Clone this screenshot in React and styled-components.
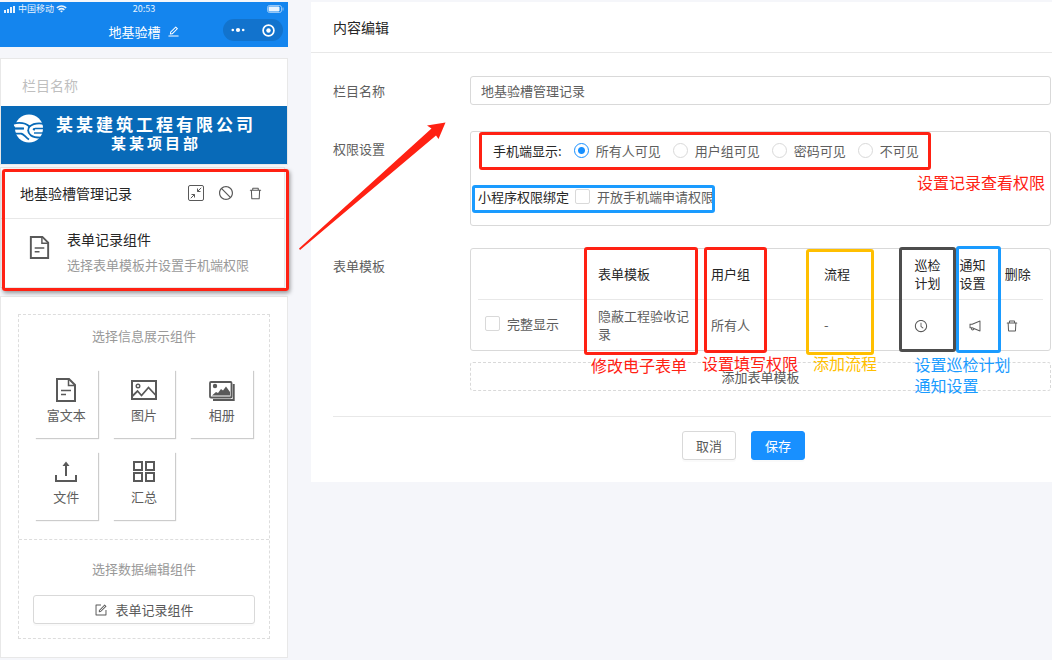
import React, { useState } from "react";
import styled, { createGlobalStyle } from "styled-components";
import {
    AiOutlineClockCircle,
    AiOutlineDelete,
    AiOutlineEdit,
    AiOutlineForm,
    AiOutlineNotification,
    AiOutlineStop,
} from "react-icons/ai";

const RED = "#ff2113";
const BLUE = "#1a9bff";
const YELLOW = "#ffbf00";
const DARK = "#4d4d4d";

const GlobalStyle = createGlobalStyle`
  * {
    box-sizing: border-box;
  }

  body {
    margin: 0;
    background: #f5f6fa;
    color: #5e5e5e;
    font-family: "Noto Sans CJK SC", sans-serif;
    font-size: 13px;
    line-height: 20px;
  }

  button,
  input {
    font: inherit;
    color: inherit;
  }
`;

const Page = styled.div`
  position: relative;
  display: flex;
  align-items: flex-start;
  gap: 23px;
  padding-top: 2px;
`;

/* ---------- annotations ---------- */

const Mark = styled.span`
  position: absolute;
  z-index: 2;
  top: ${(p) => p.$top}px;
  left: ${(p) => p.$left}px;
  width: ${(p) => p.$width}px;
  height: ${(p) => p.$height}px;
  border: 3px solid ${(p) => p.$color};
  border-radius: 3px;
  box-shadow: ${(p) => (p.$shadow ? "1px 2px 4px rgba(0, 0, 0, 0.4)" : "none")};
  pointer-events: none;
`;

const Note = styled.span`
  position: absolute;
  z-index: 2;
  top: ${(p) => p.$top}px;
  left: ${(p) => p.$left}px;
  color: ${(p) => p.$color};
  font-size: 16px;
  line-height: 21px;
  white-space: nowrap;
  pointer-events: none;
`;

const Arrow = styled.svg`
  position: absolute;
  z-index: 3;
  top: 122px;
  left: 298px;
  pointer-events: none;
`;

/* ---------- phone preview ---------- */

const Phone = styled.aside`
  flex: none;
  width: 288px;
`;

const PhoneHeader = styled.header`
  height: 45px;
  background: #1485ee;
  color: #fff;
`;

const StatusBar = styled.div`
  display: grid;
  grid-template-columns: 1fr auto 1fr;
  align-items: center;
  height: 14px;
  padding: 0 4px;
  font-size: 9px;
  line-height: 14px;
  opacity: 0.9;
`;

const StatusGroup = styled.div`
  display: flex;
  align-items: center;
  justify-content: ${(p) => (p.$end ? "flex-end" : "flex-start")};
  gap: 2px;
`;

const TitleBar = styled.div`
  display: grid;
  grid-template-columns: 1fr auto 1fr;
  align-items: center;
  height: 28px;
`;

const PhoneTitle = styled.div`
  grid-column: 2;
  display: flex;
  align-items: center;
  gap: 6px;
  padding-top: 3px;
`;

const Capsule = styled.div`
  justify-self: end;
  display: flex;
  align-items: center;
  justify-content: space-around;
  width: 60px;
  height: 22px;
  margin-right: 5px;
  border-radius: 11px;
  background: #1273cd;
`;

const NameBox = styled.div`
  margin-top: 11px;
  border: 1px solid #e8e8e8;
  background: #fff;
`;

const NameInput = styled.input`
  display: block;
  width: 100%;
  height: 47px;
  padding: 4px 21px 0;
  border: 0;
  outline: 0;
  background: transparent;
  font-size: 14px;

  &::placeholder {
    color: #bfbfbf;
    opacity: 1;
  }
`;

const Banner = styled.div`
  display: flex;
  align-items: flex-start;
  height: 58px;
  padding: 8px 20px 0 12px;
  background: #086ab8;
  color: #fff;
`;

const BannerText = styled.div`
  flex: 1;
  text-align: center;
  font-weight: 700;
`;

const Company = styled.div`
  font-size: 17px;
  letter-spacing: 3px;
`;

const Project = styled.div`
  font-size: 15px;
  letter-spacing: 3px;
  line-height: 18px;
`;

const RecordCard = styled.section`
  position: relative;
  margin: 2px 3px 0 0;
  border: 1px solid #e8e8e8;
  background: #fff;
`;

const RecordHead = styled.div`
  display: flex;
  align-items: center;
  justify-content: space-between;
  height: 51px;
  padding: 0 21px 0 19px;
  border-bottom: 1px solid #e8e8e8;
  color: #262626;
  font-size: 14px;
`;

const Actions = styled.div`
  display: flex;
  align-items: center;
  gap: 14px;
`;

const IconButton = styled.button`
  display: inline-flex;
  padding: 0;
  border: 0;
  background: none;
  color: ${(p) => p.$color || "#595959"};
  vertical-align: middle;
  cursor: pointer;
`;

const RecordBody = styled.div`
  display: flex;
  gap: 15px;
  height: 68px;
  padding: 8px 0 0 26px;
`;

const RecordIcon = styled.div`
  padding-top: 8px;
`;

const RecordName = styled.div`
  color: #262626;
  font-size: 14px;
  line-height: 24px;
`;

const RecordHint = styled.div`
  color: #999;
  line-height: 28px;
  white-space: nowrap;
`;

const Picker = styled.section`
  margin-top: 8px;
  padding: 17px 17px 18px;
  border: 1px solid #e8e8e8;
  background: #fff;
`;

const PickerBox = styled.div`
  border: 1px dashed #ddd;
`;

const PickerGroup = styled.div`
  padding: ${(p) => (p.$last ? "19px 14px 14px" : "11px 16px 19px")};
  border-top: ${(p) => (p.$last ? "1px dashed #ddd" : "0")};
`;

const PickerTitle = styled.div`
  margin-bottom: ${(p) => (p.$tight ? 16 : 24)}px;
  color: #999;
  text-align: center;
`;

const Tiles = styled.div`
  display: grid;
  grid-template-columns: repeat(3, 1fr);
  gap: 14px 15px;
`;

const Tile = styled.button`
  display: flex;
  flex-direction: column;
  align-items: center;
  gap: 2px;
  height: 68px;
  padding: 7px 0 0;
  border: 0;
  background: #fff;
  box-shadow: 1px 1px 1px #ccc;
  cursor: pointer;
`;

/* ---------- buttons ---------- */

const Button = styled.button`
  display: flex;
  align-items: center;
  justify-content: center;
  gap: 7px;
  width: ${(p) => (p.$block ? "100%" : "54px")};
  height: 29px;
  padding: 0;
  border: 1px ${(p) => (p.$dashed ? "dashed" : "solid")}
    ${(p) => (p.$primary ? "#1890ff" : "#d9d9d9")};
  border-radius: 3px;
  background: ${(p) => (p.$primary ? "#1890ff" : "#fff")};
  color: ${(p) => (p.$primary ? "#fff" : "#595959")};
  box-shadow: ${(p) => (p.$dashed ? "none" : "0 2px 0 rgba(0, 0, 0, 0.02)")};
  cursor: pointer;
`;

/* ---------- editor ---------- */

const Editor = styled.main`
  flex: 1;
  min-width: 0;
  background: #fff;
`;

const EditorTitle = styled.h1`
  margin: 0;
  padding: 15px 22px;
  border-bottom: 1px solid #e8e8e8;
  color: #262626;
  font-size: 14px;
  font-weight: 400;
  line-height: 20px;
`;

const Form = styled.form`
  padding: 23px 1px 22px 22px;
`;

const FormRow = styled.div`
  display: grid;
  grid-template-columns: 137px minmax(0, 1fr);
  align-items: start;
  margin-bottom: 22px;
`;

const Label = styled.label`
  padding: ${(p) => (p.$low ? "3px 0 0" : "0 0 4px")};
  line-height: 29px;
`;

const TextInput = styled.input`
  width: 100%;
  height: 29px;
  padding: 0 10px;
  border: 1px solid #d9d9d9;
  border-radius: 3px;
  outline: 0;
`;

const Panel = styled.div`
  position: relative;
  height: ${(p) => (p.$height ? `${p.$height}px` : "auto")};
  padding: 0 7px;
  border: 1px solid #d9d9d9;
  border-radius: 3px;
`;

const OptionLine = styled.div`
  display: flex;
  align-items: center;
  gap: ${(p) => (p.$gap ? p.$gap : 12)}px;
  height: 37px;
  margin-bottom: 9px;
  padding-left: ${(p) => (p.$indent ? 15 : 0)}px;
`;

const OptionTitle = styled.span`
  color: #262626;
`;

const Choice = styled.label`
  display: inline-flex;
  align-items: center;
  gap: 7px;
  white-space: nowrap;
`;

const Radio = styled.input`
  appearance: none;
  width: 15px;
  height: 15px;
  margin: 0;
  border: 1px solid #d9d9d9;
  border-radius: 50%;

  &:checked {
    border-color: #1890ff;
    background: radial-gradient(#1890ff 0 3px, #fff 4px);
  }
`;

const Checkbox = styled.input`
  appearance: none;
  width: 15px;
  height: 15px;
  margin: 0;
  border: 1px solid #d9d9d9;
  border-radius: 2px;
  background: #fff;

  &:checked {
    background: #1890ff;
  }
`;

const Table = styled.table`
  width: 100%;
  border-collapse: separate;
  border-spacing: 0;
  table-layout: fixed;
  line-height: 18px;
`;

const Th = styled.th`
  position: relative;
  width: ${(p) => p.$width}%;
  padding: 7px;
  border-bottom: 1px solid #e8e8e8;
  color: #262626;
  font-weight: inherit;
  text-align: left;
`;

const Td = styled.td`
  padding: 7px;
  text-align: ${(p) => (p.$center ? "center" : "left")};
`;

const AddRow = styled.div`
  margin-top: 11px;
`;

const Footer = styled.div`
  display: flex;
  justify-content: center;
  gap: 15px;
  margin-top: 25px;
  padding: 14px 0 0 103px;
  border-top: 1px solid #e8e8e8;
`;

/* ---------- icons ---------- */

const DocIcon = ({ size = 26 }) => (
    <svg width={size} height={size} viewBox="0 0 26 26" fill="none" stroke="#595959" strokeWidth="2">
        <path d="M4 2H16L22 8V24H4Z" />
        <path d="M15.5 2V8.5H22" strokeWidth="1.5" />
        <path d="M8 13.5H18M8 17.5H13" strokeWidth="1.5" />
    </svg>
);

const PictureIcon = () => (
    <svg width="26" height="26" viewBox="0 0 26 26" fill="none" stroke="#595959">
        <rect x="1" y="4" width="24" height="18" strokeWidth="2" />
        <circle cx="7" cy="9" r="1.8" strokeWidth="1.4" />
        <path d="M1.5 19L6.5 14L10.5 18.5L17.5 10.5L24.5 18" strokeWidth="1.8" />
    </svg>
);

const AlbumIcon = () => (
    <svg width="26" height="26" viewBox="0 0 26 26" fill="none" stroke="#595959">
        <path d="M24.7 7V23H4" strokeWidth="2" />
        <rect x="1" y="5" width="21.5" height="15.5" rx="1" strokeWidth="1.8" fill="#fff" />
        <circle cx="6" cy="9" r="2.2" fill="#595959" stroke="none" />
        <path d="M3 18.5L7 15L9 16L12 12L14 13.5L17 9.5L21 15V18.5Z" fill="#595959" stroke="none" />
    </svg>
);

const UploadIcon = () => (
    <svg width="26" height="26" viewBox="0 0 26 26" fill="none" stroke="#595959" strokeWidth="2">
        <path d="M3 16V22H23V16" />
        <path d="M13 17V5" />
        <path d="M13 2.5L16.5 7H9.5Z" fill="#595959" stroke="none" />
    </svg>
);

const GridIcon = () => (
    <svg width="26" height="26" viewBox="0 0 26 26" fill="none" stroke="#595959" strokeWidth="2">
        <rect x="3" y="3" width="8" height="8" />
        <rect x="15" y="3" width="8" height="8" />
        <rect x="3" y="14" width="8" height="8" />
        <rect x="15" y="14" width="8" height="8" />
    </svg>
);

const CollapseIcon = () => (
    <svg width="16" height="16" viewBox="0 0 16 16" fill="none" stroke="#595959">
        <rect x="0.5" y="0.5" width="15" height="15" rx="1.5" />
        <path d="M13.2 2.8L9.5 6.5M2.8 13.2L6.5 9.5" />
        <path d="M9.5 3.5V6.5H12.5M6.5 12.5V9.5H3.5" />
    </svg>
);

const SignalIcon = () => (
    <svg width="12" height="7" viewBox="0 0 12 7" fill="#fff">
        <rect x="0" y="4" width="2" height="3" />
        <rect x="3" y="3" width="2" height="4" />
        <rect x="6" y="1" width="2" height="6" />
        <rect x="9" y="0" width="2" height="7" />
    </svg>
);

const WifiIcon = () => (
    <svg width="11" height="8" viewBox="0 0 11 8" fill="none" stroke="#fff" strokeWidth="1.5">
        <path d="M0.8 2.8Q5.5 -1 10.2 2.8" />
        <path d="M2.6 4.9Q5.5 2.4 8.4 4.9" />
        <path d="M4 6L5.5 7.6L7 6Q5.5 4.9 4 6Z" fill="#fff" stroke="none" />
    </svg>
);

const BatteryIcon = () => (
    <svg width="17" height="8" viewBox="0 0 17 8">
        <rect x="0.5" y="0.5" width="14" height="7" rx="2" fill="none" stroke="#fff" strokeOpacity="0.6" />
        <rect x="1.5" y="1.5" width="11" height="5" rx="1" fill="#fff" />
        <rect x="15.5" y="2.5" width="1" height="3" fill="#fff" opacity="0.6" />
    </svg>
);

const DotsIcon = () => (
    <svg width="14" height="6" viewBox="0 0 14 6" fill="#fff">
        <circle cx="1.8" cy="3" r="1.3" />
        <circle cx="7" cy="3" r="2.1" />
        <circle cx="12.2" cy="3" r="1.3" />
    </svg>
);

const TargetIcon = () => (
    <svg width="13" height="13" viewBox="0 0 13 13">
        <circle cx="6.5" cy="6.5" r="5.4" fill="none" stroke="#fff" strokeWidth="1.7" />
        <circle cx="6.5" cy="6.5" r="2.2" fill="#fff" />
    </svg>
);

const LogoIcon = () => (
    <svg width="32" height="30" viewBox="0 0 32 30">
        <circle cx="16" cy="14.5" r="14" fill="#fff" />
        <g fill="none" stroke="#086ab8">
            <path d="M0 9.5C8 8 13 9 16.5 12.5C20 9.5 25 8.5 32 10" strokeWidth="1.8" />
            <path d="M0 14.5H11" strokeWidth="2.2" />
            <path d="M16.8 12C14.5 15 14.5 18.5 18 21.5C21 24 26 23.8 32 23.5" strokeWidth="1.8" />
            <path d="M31 14.5H22.5C19.5 14.8 20 15.8 22 15.8" strokeWidth="1.6" />
            <path d="M31 19H21" strokeWidth="1.4" />
            <path d="M0 19.5H8C11 20 12 23 16 25.5" strokeWidth="1.8" />
        </g>
        <path d="M1 11.5C7 10.5 13 11.5 13.5 14.5C13.5 17 10 17.5 3 17.5" fill="none" stroke="#fff" strokeWidth="2" />
    </svg>
);

const tiles = [
    { name: "富文本", icon: <DocIcon /> },
    { name: "图片", icon: <PictureIcon /> },
    { name: "相册", icon: <AlbumIcon /> },
    { name: "文件", icon: <UploadIcon /> },
    { name: "汇总", icon: <GridIcon /> },
];

const visibility = ["所有人可见", "用户组可见", "密码可见", "不可见"];

const PhonePreview = () => (
    <Phone>
        <PhoneHeader>
            <StatusBar>
                <StatusGroup>
                    <SignalIcon />
                    <span>中国移动</span>
                    <WifiIcon />
                </StatusGroup>
                <span>20:53</span>
                <StatusGroup $end>
                    <BatteryIcon />
                </StatusGroup>
            </StatusBar>
            <TitleBar>
                <PhoneTitle>
                    <span>地基验槽</span>
                    <IconButton type="button" aria-label="编辑" $color="#fff">
                        <AiOutlineEdit size={13} />
                    </IconButton>
                </PhoneTitle>
                <Capsule>
                    <DotsIcon />
                    <TargetIcon />
                </Capsule>
            </TitleBar>
        </PhoneHeader>

        <NameBox>
            <NameInput placeholder="栏目名称" aria-label="栏目名称" />
            <Banner>
                <LogoIcon />
                <BannerText>
                    <Company>某某建筑工程有限公司</Company>
                    <Project>某某项目部</Project>
                </BannerText>
            </Banner>
        </NameBox>

        <RecordCard>
            <RecordHead>
                <span>地基验槽管理记录</span>
                <Actions>
                    <IconButton type="button" aria-label="收起">
                        <CollapseIcon />
                    </IconButton>
                    <IconButton type="button" aria-label="停用">
                        <AiOutlineStop size={16} />
                    </IconButton>
                    <IconButton type="button" aria-label="删除">
                        <AiOutlineDelete size={15} />
                    </IconButton>
                </Actions>
            </RecordHead>
            <RecordBody>
                <RecordIcon>
                    <DocIcon size={25} />
                </RecordIcon>
                <div>
                    <RecordName>表单记录组件</RecordName>
                    <RecordHint>选择表单模板并设置手机端权限</RecordHint>
                </div>
            </RecordBody>
            <Mark $color={RED} $top={1} $left={1} $width={287} $height={122} $shadow />
        </RecordCard>

        <Picker>
            <PickerBox>
                <PickerGroup>
                    <PickerTitle>选择信息展示组件</PickerTitle>
                    <Tiles>
                        {tiles.map((tile) => (
                            <Tile type="button" key={tile.name}>
                                {tile.icon}
                                <span>{tile.name}</span>
                            </Tile>
                        ))}
                    </Tiles>
                </PickerGroup>
                <PickerGroup $last>
                    <PickerTitle $tight>选择数据编辑组件</PickerTitle>
                    <Button type="button" $block>
                        <AiOutlineForm size={14} />
                        表单记录组件
                    </Button>
                </PickerGroup>
            </PickerBox>
        </Picker>
    </Phone>
);

const PermissionPanel = () => {
    const [visible, setVisible] = useState(visibility[0]);

    return (
        <Panel $height={95}>
            <OptionLine $indent>
                <OptionTitle>手机端显示:</OptionTitle>
                {visibility.map((item) => (
                    <Choice key={item}>
                        <Radio
                            type="radio"
                            name="visible"
                            checked={visible === item}
                            onChange={() => setVisible(item)}
                        />
                        {item}
                    </Choice>
                ))}
            </OptionLine>
            <OptionLine $gap={6}>
                <OptionTitle>小程序权限绑定</OptionTitle>
                <Choice>
                    <Checkbox type="checkbox" />
                    开放手机端申请权限
                </Choice>
            </OptionLine>
            <Mark $color={RED} $top={0} $left={8} $width={452} $height={38} />
            <Mark $color={BLUE} $top={53} $left={1} $width={243} $height={28} />
            <Note $color={RED} $top={40} $left={446}>
                设置记录查看权限
            </Note>
        </Panel>
    );
};

const TemplateTable = () => (
    <Panel>
        <Table>
            <thead>
                <tr>
                    <Th $width={20} />
                    <Th $width={20}>
                        表单模板
                        <Mark $color={RED} $top={-2} $left={-7} $width={114} $height={108} />
                        <Note $color={RED} $top={106} $left={0}>
                            修改电子表单
                        </Note>
                    </Th>
                    <Th $width={20}>
                        用户组
                        <Mark $color={RED} $top={-2} $left={0} $width={63} $height={106} />
                        <Note $color={RED} $top={104} $left={-2}>
                            设置填写权限
                        </Note>
                    </Th>
                    <Th $width={16}>
                        流程
                        <Mark $color={YELLOW} $top={0} $left={-11} $width={68} $height={106} />
                        <Note $color={YELLOW} $top={104} $left={-4}>
                            添加流程
                        </Note>
                    </Th>
                    <Th $width={8}>
                        巡检计划
                        <Mark $color={DARK} $top={-2} $left={-8} $width={57} $height={105} />
                        <Note $color={BLUE} $top={105} $left={7}>
                            设置巡检计划
                            <br />
                            通知设置
                        </Note>
                    </Th>
                    <Th $width={8}>
                        通知设置
                        <Mark $color={BLUE} $top={-3} $left={3} $width={45} $height={107} />
                    </Th>
                    <Th $width={8}>删除</Th>
                </tr>
            </thead>
            <tbody>
                <tr>
                    <Td>
                        <Choice>
                            <Checkbox type="checkbox" />
                            完整显示
                        </Choice>
                    </Td>
                    <Td>隐蔽工程验收记录</Td>
                    <Td>所有人</Td>
                    <Td>-</Td>
                    <Td>
                        <IconButton type="button" aria-label="巡检计划">
                            <AiOutlineClockCircle size={14} />
                        </IconButton>
                    </Td>
                    <Td $center>
                        <IconButton type="button" aria-label="通知设置">
                            <AiOutlineNotification size={14} />
                        </IconButton>
                    </Td>
                    <Td>
                        <IconButton type="button" aria-label="删除">
                            <AiOutlineDelete size={14} />
                        </IconButton>
                    </Td>
                </tr>
            </tbody>
        </Table>
    </Panel>
);

const ContentEditor = () => {
    const [name, setName] = useState("地基验槽管理记录");

    return (
        <Editor>
            <EditorTitle>内容编辑</EditorTitle>
            <Form onSubmit={(e) => e.preventDefault()}>
                <FormRow>
                    <Label htmlFor="column-name">栏目名称</Label>
                    <TextInput
                        id="column-name"
                        value={name}
                        onChange={(e) => setName(e.target.value)}
                    />
                </FormRow>
                <FormRow>
                    <Label as="span" $low>权限设置</Label>
                    <PermissionPanel />
                </FormRow>
                <FormRow>
                    <Label as="span" $low>表单模板</Label>
                    <div>
                        <TemplateTable />
                        <AddRow>
                            <Button type="button" $block $dashed>
                                添加表单模板
                            </Button>
                        </AddRow>
                    </div>
                </FormRow>
                <Footer>
                    <Button type="button">取消</Button>
                    <Button type="submit" $primary>
                        保存
                    </Button>
                </Footer>
            </Form>
        </Editor>
    );
};

const App = () => (
    <>
        <GlobalStyle />
        <Page>
            <PhonePreview />
            <ContentEditor />
            <Arrow width="150" height="130" viewBox="0 0 150 130">
                <path
                    d="M1 126.5L133.5 6.5L129 3.5L147.5 0.5L140.5 17L138 13.5L2 128Z"
                    fill={RED}
                />
            </Arrow>
        </Page>
    </>
);

export default App;
